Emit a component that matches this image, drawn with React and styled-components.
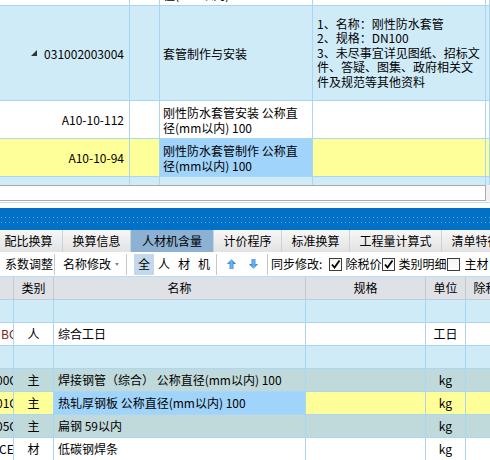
import React from "react";
import styled, { createGlobalStyle } from "styled-components";

const GlobalStyle = createGlobalStyle`
  *, *::before, *::after { box-sizing: border-box; }
  html, body { margin: 0; padding: 0; background: #fff; overflow: hidden; }
  body {
    font-family: "Noto Sans CJK SC", "Noto Sans", sans-serif;
    font-size: 12px;
    color: #000;
  }
`;

const LINE = "#AAD6F4";
const LIGHT = "#CFEBF8";
const YELLOW = "#FFFF99";
const SELECT = "#A0D4FB";
const TEAL = "#C0DADC";

const Page = styled.div`
  width: 490px;
  height: 460px;
  overflow: hidden;
  display: flex;
  flex-direction: column;
`;

/* ---------- upper grid ---------- */
const TopView = styled.div`
  height: 185px;
  flex: none;
  overflow: hidden;
`;
const TopScroll = styled.div`
  margin-top: -32px;
`;
const TRow = styled.div`
  display: grid;
  grid-template-columns: 130px 30px 153px 173px 1fr;
  height: ${(p) => p.$h}px;
  background: ${(p) => p.$bg};
  border-bottom: 1px solid ${LINE};
`;
const TCell = styled.div`
  border-right: 1px solid ${LINE};
  display: flex;
  align-items: center;
  justify-content: ${(p) => (p.$right ? "flex-end" : "flex-start")};
  padding: ${(p) => p.$pad || "0"};
  background: ${(p) => p.$bg || "transparent"};
  overflow: hidden;
  white-space: nowrap;
  line-height: 15px;
`;
const Code = styled.span`
  display: inline-flex;
  align-items: center;
  gap: 7px;
`;
const Lines = styled.div`
  line-height: ${(p) => p.$lh || 15}px;
  white-space: nowrap;
`;

/* ---------- horizontal scrollbar / splitter ---------- */
const HScroll = styled.div`
  height: 16px;
  flex: none;
  background: #f0f0f0;
  display: flex;
`;
const HTrack = styled.div`
  width: 486px;
  border: 1px solid #ababab;
  border-left: none;
  background: #fff;
`;
const Splitter = styled.div`
  height: 7px;
  flex: none;
  background: linear-gradient(#fff 0 1px, #bee0f6 1px 2px, #fff 2px);
`;
const BlueBand = styled.div`
  height: 22px;
  flex: none;
  background:
    repeating-linear-gradient(90deg, #5aa5e2 0 1px, transparent 1px 4px) 1px 9px / 100% 1px no-repeat,
    repeating-linear-gradient(90deg, #5aa5e2 0 1px, transparent 1px 4px) 1px 14px / 100% 1px no-repeat,
    #0071c5;
`;

/* ---------- tabs ---------- */
const TabBar = styled.div`
  height: 22px;
  flex: none;
  display: flex;
  margin-left: -5px;
  background: linear-gradient(#f7f7f7, #e3e3e3);
`;
const Tab = styled.div`
  flex: none;
  padding: 0 ${(p) => (p.$active ? "11px" : "9.5px")};
  display: flex;
  align-items: center;
  border-right: 1px solid #c9d3de;
  background: ${(p) => (p.$active ? "#8db1d2" : "linear-gradient(#f7f7f7, #e2e2e2)")};
  white-space: nowrap;
  line-height: 1;
`;

/* ---------- toolbar ---------- */
const Toolbar = styled.div`
  height: 25px;
  flex: none;
  display: flex;
  align-items: center;
  border-bottom: 1px solid #b7dcf5;
  background: #fff;
  white-space: nowrap;
`;
const ToolText = styled.span`
  flex: none;
  margin-left: ${(p) => p.$ml || 0}px;
  line-height: 1;
`;
const Sep = styled.div`
  flex: none;
  width: 1px;
  height: 21px;
  background: #c6c6c6;
  margin-left: ${(p) => p.$ml || 0}px;
`;
const Caret = styled.span`
  flex: none;
  width: 0;
  height: 0;
  margin-left: 4px;
  border-left: 2.5px solid transparent;
  border-right: 2.5px solid transparent;
  border-top: 3px solid #888;
`;
const CharBtn = styled.span`
  flex: none;
  width: 20px;
  height: 21px;
  margin-left: ${(p) => p.$ml || 0}px;
  display: flex;
  align-items: center;
  justify-content: center;
  background: ${(p) => (p.$active ? "#c3d8eb" : "transparent")};
  line-height: 1;
`;
const IconBtn = styled.span`
  flex: none;
  width: 22px;
  height: 21px;
  margin-left: ${(p) => p.$ml || 0}px;
  display: flex;
  align-items: center;
  justify-content: center;
`;
const Box = styled.span`
  flex: none;
  width: 13px;
  height: 13px;
  margin-left: ${(p) => p.$ml || 0}px;
  border: 1px solid #3c3c3c;
  background: linear-gradient(#f4f4f4, #fff);
  display: flex;
  align-items: center;
  justify-content: center;
`;

/* ---------- lower grid ---------- */
const GRow = styled.div`
  display: grid;
  grid-template-columns: 14px 40px 252px 120px 40px 52px;
  height: 23px;
  flex: none;
  background: ${(p) => p.$bg};
  border-bottom: 1px solid ${(p) => p.$line || LINE};
`;
const GCell = styled.div`
  border-right: 1px solid ${(p) => p.$line || LINE};
  display: flex;
  align-items: center;
  justify-content: ${(p) => (p.$center ? "center" : "flex-start")};
  padding-left: ${(p) => p.$pl || 0}px;
  background: ${(p) => p.$bg || "transparent"};
  overflow: hidden;
  white-space: nowrap;
  line-height: 1;
  color: ${(p) => p.$color || "#000"};
`;
const Clip = styled.span`
  margin-left: ${(p) => p.$ml}px;
`;

const TreeMark = () => (
  <svg width="6" height="6" viewBox="0 0 6 6">
    <polygon points="6,0 6,6 0,6" fill="#333" />
  </svg>
);

const Arrow = ({ down }) => (
  <svg width="9" height="10" viewBox="0 0 9 10" style={down ? { transform: "rotate(180deg)" } : undefined}>
    <defs>
      <linearGradient id={down ? "ag2" : "ag1"} x1="0" y1="0" x2="1" y2="0">
        <stop offset="0" stopColor="#2a6fd0" />
        <stop offset="0.5" stopColor="#6fb4f2" />
        <stop offset="1" stopColor="#1d5fc0" />
      </linearGradient>
    </defs>
    <path d="M4.5 0 L9 5 H6.5 V10 H2.5 V5 H0 Z" fill={`url(#${down ? "ag2" : "ag1"})`} />
  </svg>
);

const Check = () => (
  <svg width="11" height="11" viewBox="0 0 11 11">
    <path d="M2 5.5 L4.5 8.5 L9.5 1.5" fill="none" stroke="#000" strokeWidth="1.8" />
  </svg>
);

const lowerRows = [
  { bg: LIGHT },
  { bg: "#fff", code: "BC", ml: 1, codeColor: "#7a1f1f", kind: "人", name: "综合工日", unit: "工日" },
  { bg: LIGHT },
  { bg: TEAL, code: "00C", ml: -4, kind: "主", name: "焊接钢管（综合） 公称直径(mm以内) 100", unit: "kg" },
  { bg: YELLOW, nameBg: SELECT, code: "01C", ml: -4, kind: "主", name: "热轧厚钢板 公称直径(mm以内) 100", unit: "kg" },
  { bg: TEAL, code: "05C", ml: -4, kind: "主", name: "扁钢 59以内", unit: "kg" },
  { bg: "#fff", code: "CE", ml: -1, kind: "材", name: "低碳钢焊条", unit: "kg" },
];

const tabs = ["配比换算", "换算信息", "人材机含量", "计价程序", "标准换算", "工程量计算式", "清单特征"];

export default function App() {
  return (
    <Page>
      <GlobalStyle />
      <TopView>
        <TopScroll>
          <TRow $h={38} $bg="#fff">
            <TCell />
            <TCell />
            <TCell $pad="0 0 0 3px">
              <Lines>
                刚性防水套管制作 公称直
                <br />
                径(mm以内) 100
              </Lines>
            </TCell>
            <TCell />
            <TCell />
          </TRow>
          <TRow $h={95} $bg={LIGHT}>
            <TCell $right $pad="0 5px 0 0">
              <Code>
                <TreeMark />
                031002003004
              </Code>
            </TCell>
            <TCell />
            <TCell $pad="0 0 0 3px">套管制作与安装</TCell>
            <TCell $pad="0 0 0 4px">
              <Lines $lh={14.5}>
                1、名称：刚性防水套管
                <br />
                2、规格：DN100
                <br />
                3、未尽事宜详见图纸、招标文
                <br />
                件、答疑、图集、政府相关文
                <br />
                件及规范等其他资料
              </Lines>
            </TCell>
            <TCell />
          </TRow>
          <TRow $h={38} $bg="#fff">
            <TCell $right $pad="0 5px 0 0">A10-10-112</TCell>
            <TCell />
            <TCell $pad="0 0 0 3px">
              <Lines>
                刚性防水套管安装 公称直
                <br />
                径(mm以内) 100
              </Lines>
            </TCell>
            <TCell />
            <TCell />
          </TRow>
          <TRow $h={38} $bg={YELLOW}>
            <TCell $right $pad="0 5px 0 0">A10-10-94</TCell>
            <TCell />
            <TCell $pad="0 0 0 3px" $bg={SELECT}>
              <Lines>
                刚性防水套管制作 公称直
                <br />
                径(mm以内) 100
              </Lines>
            </TCell>
            <TCell />
            <TCell />
          </TRow>
          <TRow $h={30} $bg={LIGHT}>
            <TCell />
            <TCell />
            <TCell />
            <TCell />
            <TCell />
          </TRow>
        </TopScroll>
      </TopView>

      <HScroll>
        <HTrack />
      </HScroll>
      <Splitter />
      <BlueBand />

      <TabBar>
        {tabs.map((t) => (
          <Tab key={t} $active={t === "人材机含量"}>
            {t}
          </Tab>
        ))}
      </TabBar>

      <Toolbar>
        <ToolText $ml={5}>系数调整</ToolText>
        <Sep $ml={1} />
        <ToolText $ml={8}>名称修改</ToolText>
        <Caret />
        <Sep $ml={7} />
        <CharBtn $ml={7} $active>全</CharBtn>
        <CharBtn>人</CharBtn>
        <CharBtn>材</CharBtn>
        <CharBtn>机</CharBtn>
        <Sep $ml={2} />
        <IconBtn $ml={3}>
          <Arrow />
        </IconBtn>
        <IconBtn>
          <Arrow down />
        </IconBtn>
        <Sep $ml={3} />
        <ToolText $ml={3}>同步修改:</ToolText>
        <Box $ml={7}>
          <Check />
        </Box>
        <ToolText $ml={3}>除税价</ToolText>
        <Box $ml={1}>
          <Check />
        </Box>
        <ToolText $ml={3}>类别明细</ToolText>
        <Box $ml={1} />
        <ToolText $ml={4}>主材</ToolText>
      </Toolbar>

      <GRow $bg="#dee1e6" $line="#c4cad3">
        <GCell $line="#c4cad3" />
        <GCell $line="#c4cad3" $center>类别</GCell>
        <GCell $line="#c4cad3" $center>名称</GCell>
        <GCell $line="#c4cad3" $center>规格</GCell>
        <GCell $line="#c4cad3" $center>单位</GCell>
        <GCell $line="#c4cad3" $center>除税价</GCell>
      </GRow>
      {lowerRows.map((r, i) => (
        <GRow key={i} $bg={r.bg}>
          <GCell $color={r.codeColor}>{r.code && <Clip $ml={r.ml}>{r.code}</Clip>}</GCell>
          <GCell $center>{r.kind}</GCell>
          <GCell $pl={4} $bg={r.nameBg}>{r.name}</GCell>
          <GCell />
          <GCell $center>{r.unit}</GCell>
          <GCell />
        </GRow>
      ))}
    </Page>
  );
}
